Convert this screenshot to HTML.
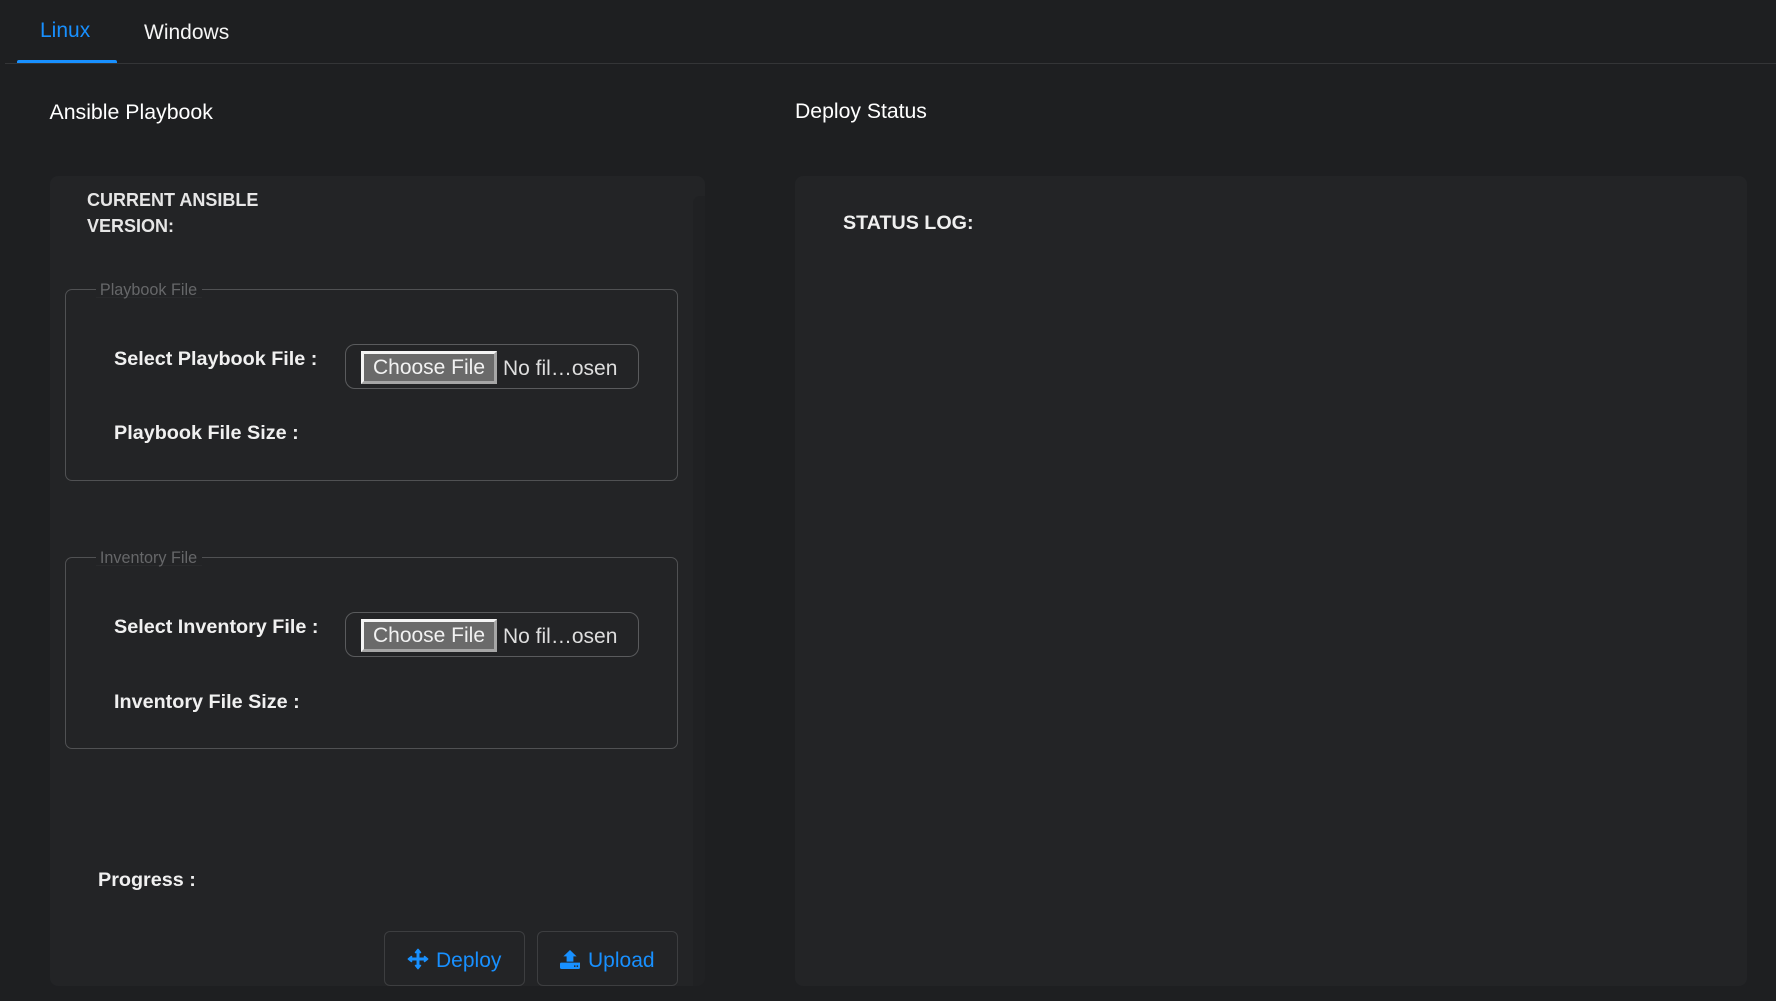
<!DOCTYPE html>
<html lang="en">
<head>
<meta charset="utf-8">
<title>Ansible Deploy</title>
<style>
html,body{margin:0;padding:0;width:1776px;height:1001px;overflow:hidden;background:#1e1f21;}
body{position:relative;font-family:"Liberation Sans",Arial,sans-serif;color:#fff;}
.a{position:absolute;white-space:nowrap;}
.line{position:absolute;left:5px;right:0;top:63px;height:1px;background:#343537;}
.ink{position:absolute;left:17px;top:60px;width:100px;height:3px;background:#1890ff;border-radius:2px 2px 0 0;}
.t21{font-size:21px;line-height:26px;}
.card{position:absolute;background:#232426;border-radius:8px;box-sizing:border-box;}
.track{position:absolute;left:693px;top:196px;width:12px;height:790px;background:#202123;border-radius:7px 0 8px 0;}
.fs{position:absolute;left:65px;width:613px;height:192px;box-sizing:border-box;border:1px solid #505153;border-radius:7px;}
.leg{position:absolute;left:96px;width:106px;height:17px;background:#232426;border-bottom:1px solid #292a2c;text-align:center;font-size:16.2px;line-height:20px;color:#666769;box-sizing:content-box;}
.lb{font-size:19.8px;font-weight:bold;line-height:26px;color:#f0f0f0;}
.inp{position:absolute;left:345px;width:294px;height:45px;box-sizing:border-box;border:1px solid #5a5b5d;border-radius:10px;}
.btn{position:absolute;left:361px;width:136px;height:33px;box-sizing:border-box;border-style:solid;border-width:3px;border-color:#f4f4f4 #a6a6a6 #a6a6a6 #f4f4f4;background:#6a6a6a;color:#f2f2f2;font-size:21px;line-height:27px;text-align:center;}
.nf{position:absolute;left:503px;font-size:21px;line-height:26px;color:#dedede;white-space:nowrap;}
.ab{position:absolute;top:931px;width:141px;height:55px;box-sizing:border-box;border:1px solid #3d3e40;border-radius:6px;}
.bt{position:absolute;top:948px;color:#1890ff;font-size:21px;line-height:26px;white-space:nowrap;}
</style>
</head>
<body>
<div class="a t21" style="left:40px;top:18px;color:#1890ff;">Linux</div>
<div class="a t21" style="left:144px;top:20px;color:#f5f5f5;">Windows</div>
<div class="line"></div>
<div class="ink"></div>

<div class="a t21" style="left:49.5px;top:99px;font-size:21.3px;">Ansible Playbook</div>
<div class="a t21" style="left:795px;top:99px;font-size:21.2px;">Deploy Status</div>

<div class="card" style="left:50px;top:176px;width:655px;height:810px;"></div>
<div class="track"></div>
<div class="card" style="left:795px;top:176px;width:952px;height:810px;"></div>

<div class="a" style="left:87px;top:187px;font-size:18px;line-height:26px;font-weight:bold;color:#e6e6e6;">CURRENT ANSIBLE<br>VERSION:</div>
<div class="a" style="left:843px;top:210px;font-size:19.7px;line-height:26px;font-weight:bold;color:#efefef;">STATUS LOG:</div>

<div class="fs" style="top:289px;"></div>
<div class="leg" style="top:280px;left:95.5px;">Playbook File</div>
<div class="a lb" style="left:114px;top:346px;">Select Playbook File :</div>
<div class="inp" style="top:344px;"></div>
<div class="btn" style="top:351px;">Choose File</div>
<div class="nf" style="top:356px;">No fil…osen</div>
<div class="a lb" style="left:114px;top:420px;">Playbook File Size :</div>

<div class="fs" style="top:557px;"></div>
<div class="leg" style="top:548px;left:95.5px;">Inventory File</div>
<div class="a lb" style="left:114px;top:614px;">Select Inventory File :</div>
<div class="inp" style="top:612px;"></div>
<div class="btn" style="top:619px;">Choose File</div>
<div class="nf" style="top:624px;">No fil…osen</div>
<div class="a lb" style="left:114px;top:689px;">Inventory File Size :</div>

<div class="a lb" style="left:98px;top:867px;">Progress :</div>

<div class="ab" style="left:384px;"></div>
<svg class="a" style="left:407px;top:948px;" width="22" height="22" viewBox="64 64 896 896" fill="#1890ff"><path d="M909.3 506.3L781.7 405.6a7.23 7.23 0 00-11.7 5.7V476H548V254h64.8c6 0 9.4-7 5.7-11.7L517.7 114.7a7.14 7.14 0 00-11.3 0L405.6 242.3a7.23 7.23 0 005.7 11.7H476v222H254v-64.8c0-6-7-9.4-11.7-5.7L114.7 506.3a7.14 7.14 0 000 11.3l127.5 100.8c4.7 3.7 11.7.4 11.7-5.7V548h222v222h-64.8c-6 0-9.4 7-5.7 11.7l100.8 127.5c2.9 3.7 8.5 3.7 11.3 0l100.8-127.5c3.7-4.7.4-11.7-5.7-11.7H548V548h222v64.8c0 6 7 9.4 11.7 5.7l127.5-100.8a7.14 7.14 0 00.1-11.4z" stroke="#1890ff" stroke-width="48" stroke-linejoin="round"/></svg>
<div class="bt" style="left:436px;">Deploy</div>

<div class="ab" style="left:537px;"></div>
<svg class="a" style="left:560px;top:950px;" width="20" height="19" viewBox="0 0 20 19" fill="#1890ff"><path d="M10 0L16.6 6.4H13.4V11.6H6.6V6.4H3.4Z"/><path d="M1.2 12.6H20V17.4Q20 19 18.4 19H1.6Q0 19 0 17.4V13.8Q0 12.6 1.2 12.6Z"/><rect x="14" y="15.4" width="1.5" height="1.5" fill="#232426"/><rect x="16.6" y="15.4" width="1.5" height="1.5" fill="#232426"/></svg>
<div class="bt" style="left:588px;">Upload</div>
</body>
</html>
